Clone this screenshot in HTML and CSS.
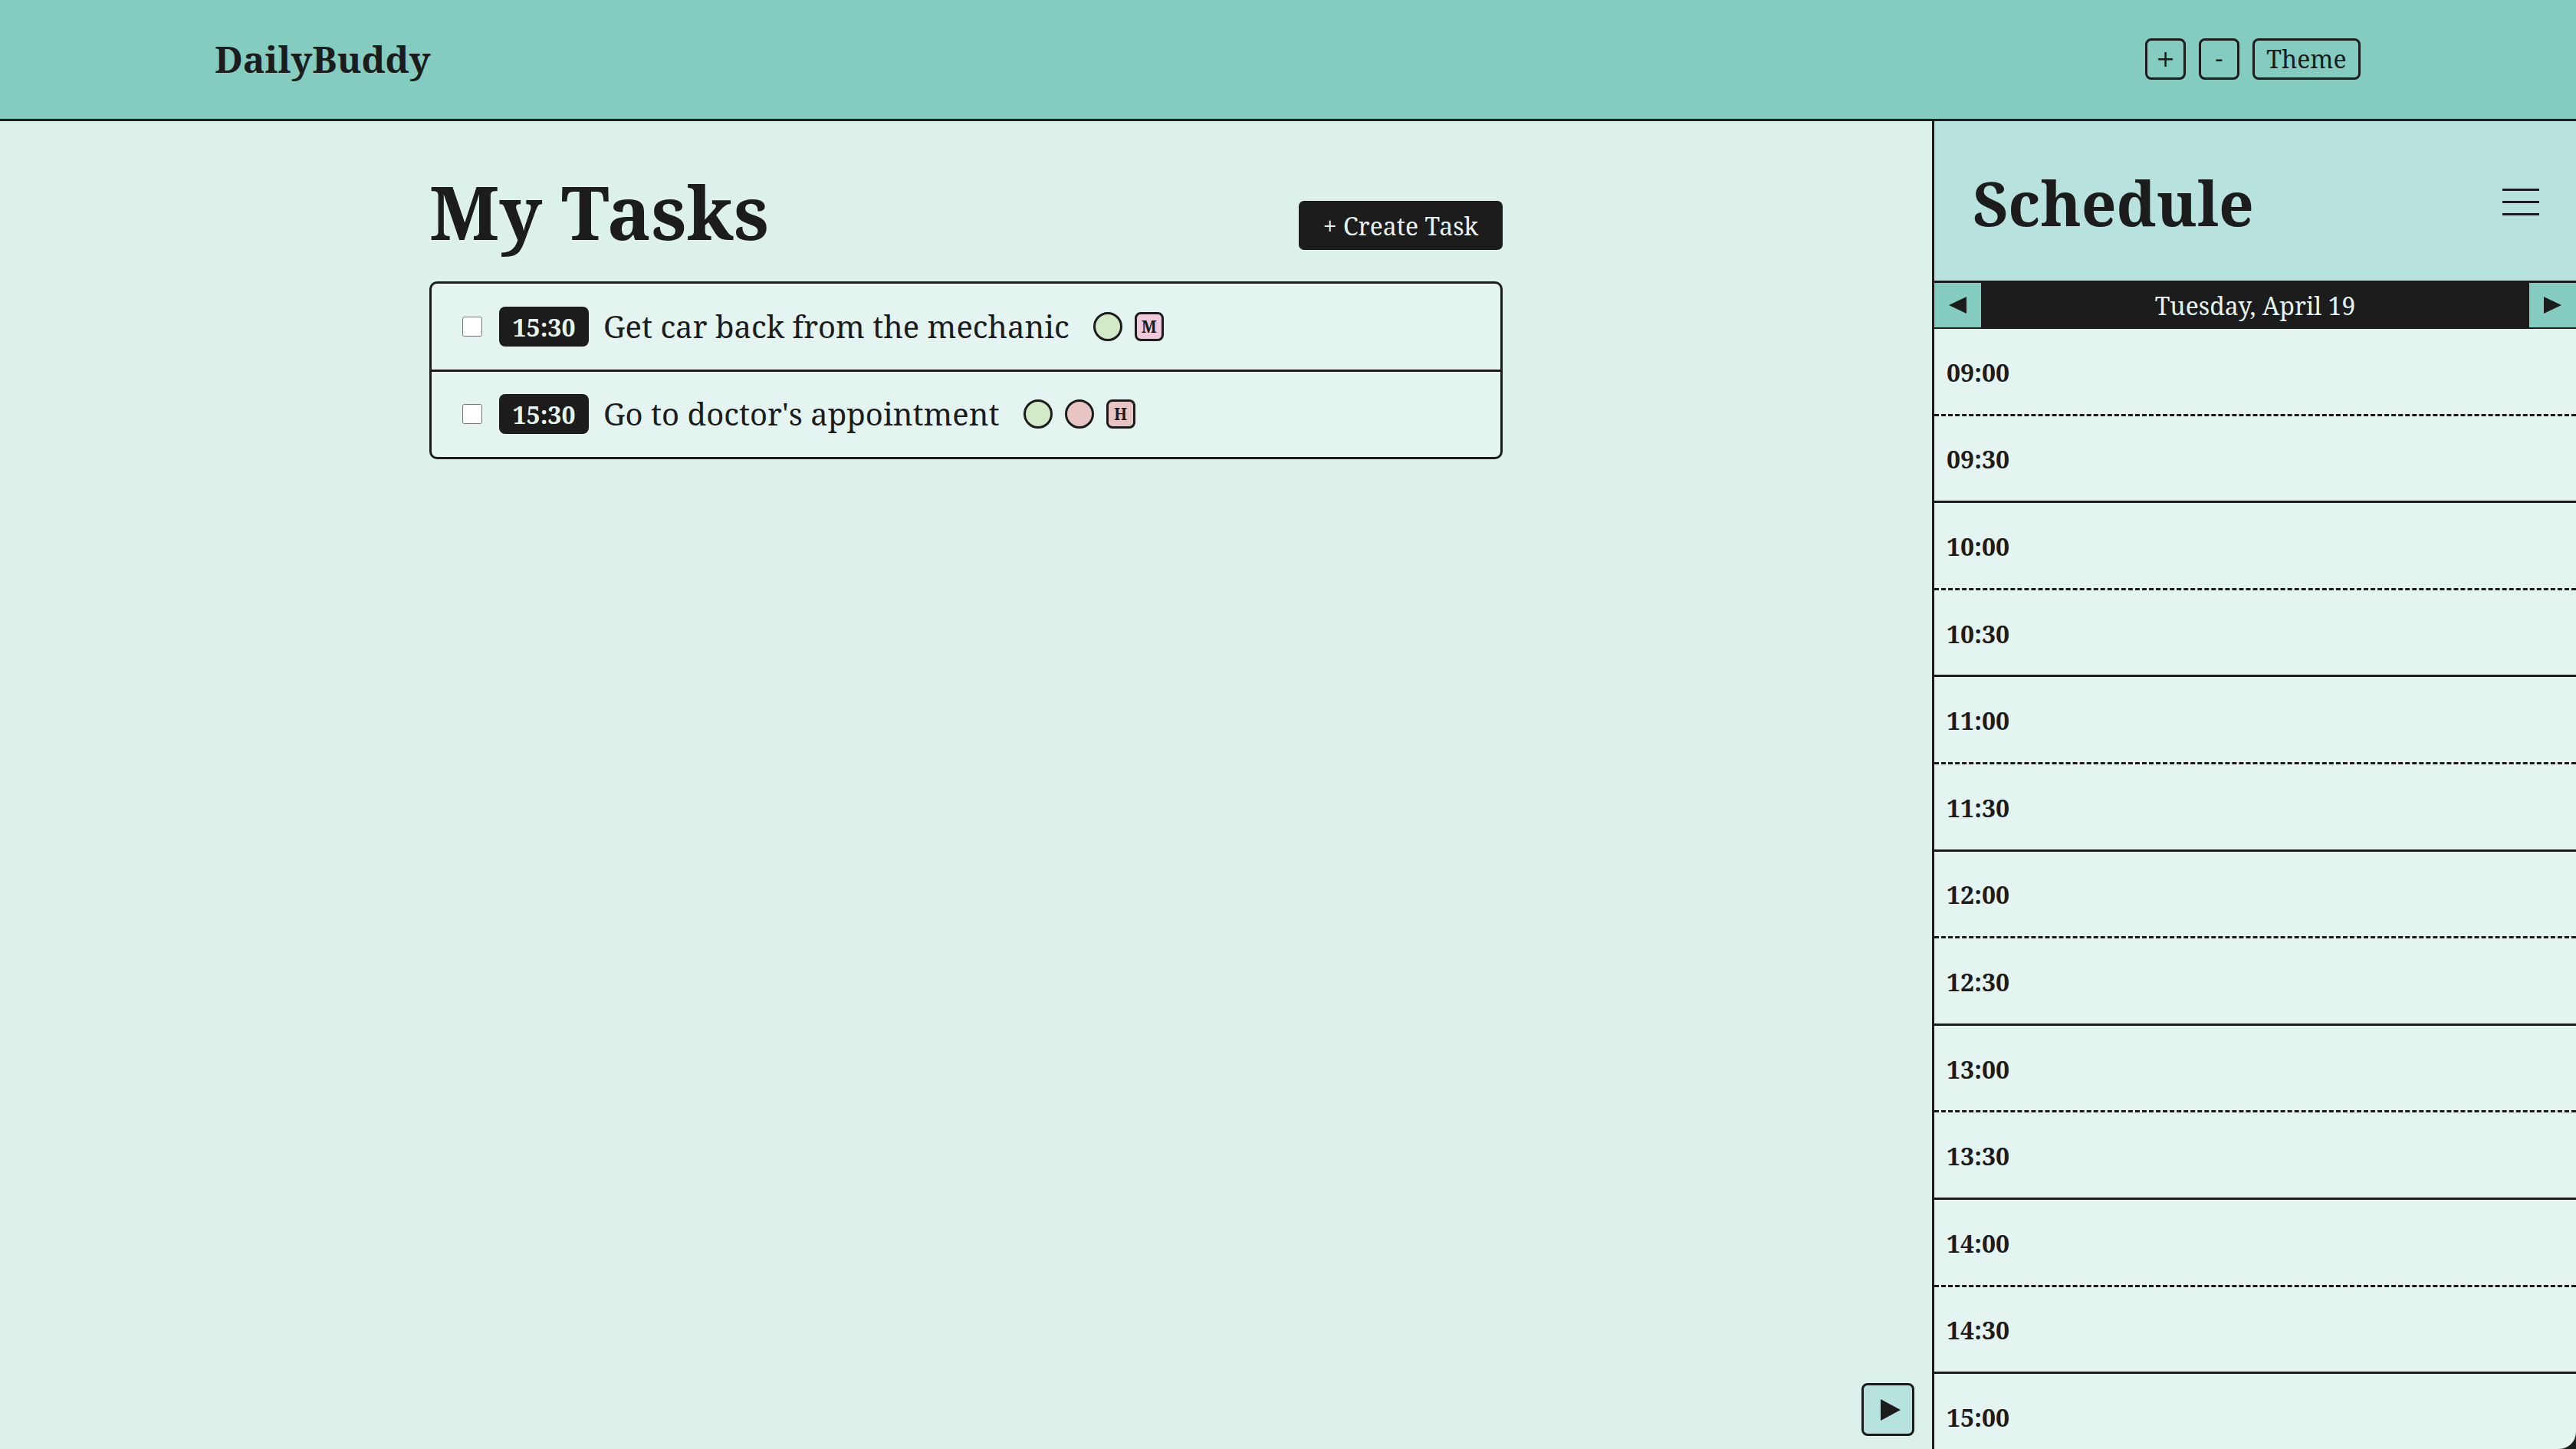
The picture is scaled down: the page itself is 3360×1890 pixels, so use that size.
FILE: index.html
```html
<!DOCTYPE html>
<html lang="en">
<head>
<meta charset="utf-8">
<title>DailyBuddy</title>
<link rel="stylesheet" href="styles.css">
</head>
<body>
<header class="topbar">
  <div class="logo">DailyBuddy</div>
  <div class="top-actions">
    <button class="outline-btn square">+</button>
    <button class="outline-btn square">-</button>
    <button class="outline-btn theme">Theme</button>
  </div>
</header>
<div class="layout">
  <main class="main">
    <div class="column">
      <div class="title-row">
        <h1 class="title">My Tasks</h1>
        <button class="create-btn">+ Create Task</button>
      </div>
      <ul class="task-list">
        <li class="task">
          <input type="checkbox" class="check">
          <span class="time-badge">15:30</span>
          <span class="task-name">Get car back from the mechanic</span>
          <span class="tags">
            <span class="dot green"></span>
            <span class="prio medium">M</span>
          </span>
        </li>
        <li class="task">
          <input type="checkbox" class="check">
          <span class="time-badge">15:30</span>
          <span class="task-name">Go to doctor's appointment</span>
          <span class="tags">
            <span class="dot green"></span>
            <span class="dot red"></span>
            <span class="prio high">H</span>
          </span>
        </li>
      </ul>
    </div>
    <button class="play-btn"><span class="play-tri"></span></button>
  </main>
  <aside class="sidebar">
    <div class="sched-head">
      <h2 class="sched-title">Schedule</h2>
      <div class="burger"><span></span><span></span><span></span></div>
    </div>
    <div class="date-bar">
      <button class="arrow-btn"><span class="tri-left"></span></button>
      <span class="date-text">Tuesday, April 19</span>
      <button class="arrow-btn"><span class="tri-right"></span></button>
    </div>
    <div class="slots">
      <div class="slot half">09:00</div>
      <div class="slot full">09:30</div>
      <div class="slot half">10:00</div>
      <div class="slot full">10:30</div>
      <div class="slot half">11:00</div>
      <div class="slot full">11:30</div>
      <div class="slot half">12:00</div>
      <div class="slot full">12:30</div>
      <div class="slot half">13:00</div>
      <div class="slot full">13:30</div>
      <div class="slot half">14:00</div>
      <div class="slot full">14:30</div>
      <div class="slot half">15:00</div>
    </div>
  </aside>
</div>
</body>
</html>
```

FILE: styles.css
```css
* { box-sizing: border-box; }
html, body {
  margin: 0;
  padding: 0;
  height: 1890px;
  overflow: hidden;
}
body {
  font-family: "Noto Serif", "DejaVu Serif", serif;
  color: #1c1c1c;
  background: #dcf0ec;
  display: flex;
  flex-direction: column;
}
button { font-family: inherit; color: inherit; cursor: pointer; }

.topbar {
  flex: 0 0 158px;
  height: 158px;
  background: #83ccbf;
  border-bottom: 3px solid #1c1c1c;
  display: flex;
  align-items: center;
  justify-content: space-between;
  padding: 0 281px 0 280px;
}
.logo {
  font-size: 48px;
  font-weight: 700;
  line-height: 1;
  margin-top: -2px;
}
.top-actions {
  display: flex;
  gap: 17px;
  margin-top: -2px;
}
.outline-btn {
  height: 54px;
  background: transparent;
  border: 3px solid #1c1c1c;
  border-radius: 8px;
  font-size: 32px;
  line-height: 1;
  padding: 0;
  display: flex;
  align-items: center;
  justify-content: center;
}
.outline-btn.square {
  width: 53px;
  font-family: "DejaVu Sans", sans-serif;
  font-size: 30px;
}
.outline-btn.theme { width: 141px; }

.layout {
  flex: 1;
  display: flex;
  min-height: 0;
}
.main {
  flex: 1;
  position: relative;
  background: #dcf0ec;
}
.column {
  width: 1400px;
  margin: 0 auto;
  padding-top: 52px;
}
.title-row {
  display: flex;
  justify-content: space-between;
  align-items: flex-end;
}
.title {
  margin: 0;
  font-size: 96px;
  font-weight: 700;
  line-height: 131px;
}
.create-btn {
  height: 64px;
  width: 266px;
  margin-bottom: 15px;
  background: #1c1c1c;
  color: #e4f4f1;
  border: none;
  border-radius: 7px;
  font-size: 32px;
  padding: 0;
}
.task-list {
  list-style: none;
  margin: 26px 0 0;
  padding: 0;
  background: #e4f4f1;
  border: 3px solid #1c1c1c;
  border-radius: 10px;
}
.task {
  height: 112px;
  display: flex;
  align-items: center;
  padding: 0 40px;
}
.task + .task {
  border-top: 3px solid #1c1c1c;
  height: 114px;
  padding-bottom: 1px;
}
.check {
  width: 26px;
  height: 26px;
  margin: 0 22px 0 0;
}
.time-badge {
  height: 52px;
  width: 117px;
  background: #1c1c1c;
  color: #e4f4f1;
  border-radius: 8px;
  font-size: 32px;
  font-weight: 700;
  display: flex;
  align-items: center;
  justify-content: center;
  margin-right: 19px;
}
.task-name {
  font-size: 40px;
  line-height: 1;
}
.tags {
  display: flex;
  gap: 16px;
  margin-left: 31px;
}
.dot {
  width: 38px;
  height: 38px;
  border-radius: 50%;
  border: 3px solid #1c1c1c;
}
.dot.green { background: #d3eac8; }
.dot.red { background: #e9c4c4; }
.prio {
  width: 38px;
  height: 38px;
  border: 3px solid #1c1c1c;
  border-radius: 8px;
  font-size: 21px;
  font-weight: 700;
  display: flex;
  align-items: center;
  justify-content: center;
}
.prio.medium { background: #efc8db; }
.prio.high { background: #e9c4c4; }

.play-btn {
  position: absolute;
  right: 23px;
  bottom: 17px;
  width: 69px;
  height: 69px;
  background: #b8e2dd;
  border: 3px solid #1c1c1c;
  border-radius: 8px;
  padding: 0;
  display: flex;
  align-items: center;
  justify-content: center;
}
.play-tri {
  width: 0;
  height: 0;
  border-top: 14px solid transparent;
  border-bottom: 14px solid transparent;
  border-left: 26px solid #1c1c1c;
  margin-left: 6px;
}

.sidebar {
  flex: 0 0 840px;
  width: 840px;
  border-left: 3px solid #1c1c1c;
  background: #1c1c1c;
  display: flex;
  flex-direction: column;
  min-height: 0;
}
.sched-head {
  flex: 0 0 208px;
  background: #b8e2dd;
  display: flex;
  align-items: center;
  justify-content: space-between;
  padding: 0 48px 0 50px;
}
.sched-title {
  margin: 0;
  font-size: 80px;
  font-weight: 700;
  line-height: 1;
  margin-top: 4px;
}
.burger {
  width: 48px;
  display: flex;
  flex-direction: column;
  gap: 13px;
  margin-top: 2px;
}
.burger span {
  display: block;
  height: 3px;
  background: #1c1c1c;
}
.date-bar {
  flex: 0 0 63px;
  background: #1c1c1c;
  padding: 3px 0 2px;
  display: flex;
  align-items: stretch;
  justify-content: space-between;
}
.arrow-btn {
  width: 61px;
  background: #83ccbf;
  border: none;
  padding: 0;
  display: flex;
  align-items: center;
  justify-content: center;
}
.tri-left {
  width: 0; height: 0;
  border-top: 11px solid transparent;
  border-bottom: 11px solid transparent;
  border-right: 23px solid #1c1c1c;
}
.tri-right {
  width: 0; height: 0;
  border-top: 11px solid transparent;
  border-bottom: 11px solid transparent;
  border-left: 23px solid #1c1c1c;
}
.date-text {
  color: #e4f4f1;
  font-size: 32px;
  display: flex;
  align-items: center;
  margin-top: 0;
}
.slots {
  flex: 1;
  min-height: 0;
  overflow: hidden;
  background: #e4f4f1;
  border-bottom-right-radius: 22px;
}
.slot {
  height: 113.6px;
  padding-left: 16px;
  padding-top: 2px;
  display: flex;
  align-items: center;
  font-size: 32px;
  font-weight: 700;
}
.slot.half { border-bottom: 3px dashed #1c1c1c; }
.slot.full { border-bottom: 3px solid #1c1c1c; }
```
